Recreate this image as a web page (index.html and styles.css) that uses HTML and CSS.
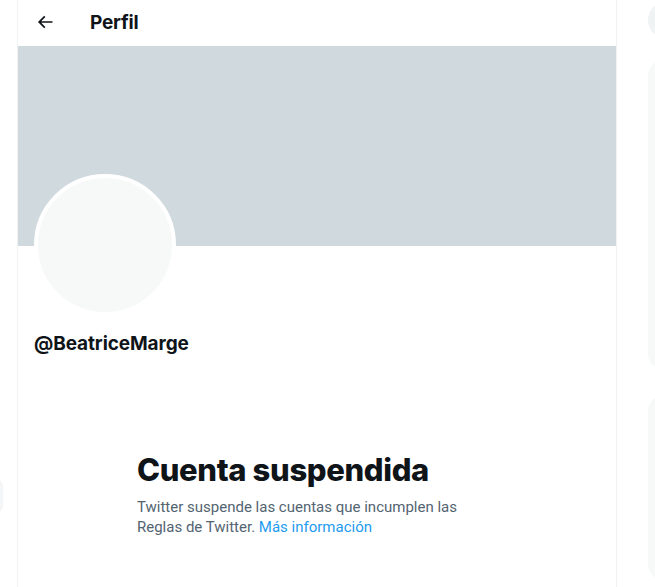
FILE: index.html
```html
<!DOCTYPE html>
<html lang="es">
<head>
  <meta charset="UTF-8">
  <meta name="viewport" content="width=device-width, initial-scale=1.0">
  <title>Perfil</title>
  <link rel="stylesheet" href="styles.css">
</head>
<body>
  <div class="page">
    <div class="sidebar">
      <div class="side-pill"></div>
    </div>

    <main class="main">
      <div class="header">
        <div class="back">
          <svg viewBox="0 0 24 24" width="20" height="20">
            <path d="M7.414 13l5.043 5.04-1.414 1.42L3.586 12l7.457-7.46 1.414 1.42L7.414 11H21v2H7.414z"></path>
          </svg>
        </div>
        <h2 class="title">Perfil</h2>
      </div>

      <div class="banner"></div>

      <div class="profile">
        <div class="avatar"></div>
        <div class="handle">@BeatriceMarge</div>
      </div>

      <div class="empty">
        <h1 class="empty-title">Cuenta suspendida</h1>
        <p class="empty-text">Twitter suspende las cuentas que incumplen las Reglas de Twitter. <a href="#">Más información</a></p>
      </div>
    </main>

    <aside class="aside">
      <div class="search"></div>
      <div class="card card-tall"></div>
      <div class="card card-low"></div>
    </aside>
  </div>
</body>
</html>
```

FILE: styles.css
```css
html, body {
  margin: 0;
  padding: 0;
  background: #fff;
  overflow: hidden;
}

body {
  font-family: "Roboto", "Liberation Sans", sans-serif;
  color: #0f1419;
}

.page {
  display: flex;
  width: 655px;
  height: 587px;
  overflow: hidden;
}

.sidebar {
  width: 17px;
  flex-shrink: 0;
  padding-top: 480px;
  overflow: hidden;
}

.side-pill {
  width: 20px;
  height: 32px;
  margin-left: -17px;
  border-radius: 6px;
  background: #f3f5f6;
}

.main {
  width: 598px;
  flex-shrink: 0;
  border-left: 1px solid #eff3f4;
  border-right: 1px solid #eff3f4;
}

.header {
  height: 46px;
  display: flex;
  align-items: center;
  padding-left: 9px;
  padding-bottom: 2px;
  box-sizing: border-box;
}

.back {
  width: 36px;
  height: 36px;
  display: flex;
  align-items: center;
  justify-content: center;
  margin-right: 27px;
}

.back svg {
  fill: #0f1419;
}

.title {
  margin: 0;
  font-family: "Inter", sans-serif;
  font-size: 19px;
  font-weight: 700;
  letter-spacing: -0.2px;
}

.banner {
  height: 200px;
  background: #cfd9de;
}

.profile {
  padding: 0 16px;
}

.avatar {
  width: 134px;
  height: 134px;
  margin-top: -72px;
  border: 4px solid #fff;
  border-radius: 50%;
  background: #f7f9f9;
}

.handle {
  margin-top: 16px;
  font-family: "Inter", sans-serif;
  font-size: 19px;
  font-weight: 700;
  letter-spacing: -0.1px;
}

.empty {
  width: 360px;
  margin: 97px 0 0 119px;
}

.empty-title {
  margin: 0;
  font-family: "Inter", sans-serif;
  font-size: 31px;
  font-weight: 800;
  line-height: 36px;
  letter-spacing: -0.35px;
}

.empty-text {
  margin: 9px 0 0;
  font-size: 15px;
  line-height: 20px;
  color: #536471;
}

.empty-text a {
  color: #1d9bf0;
  text-decoration: none;
}

.aside {
  flex-shrink: 0;
  width: 350px;
  margin-left: 31px;
}

.search {
  height: 36px;
  margin-top: 2px;
  border-radius: 18px;
  background: #eff3f4;
}

.card {
  background: #f7f9f9;
  border-radius: 16px;
}

.card-tall {
  height: 310px;
  margin-top: 22px;
}

.card-low {
  height: 185px;
  margin-top: 25px;
}
```
